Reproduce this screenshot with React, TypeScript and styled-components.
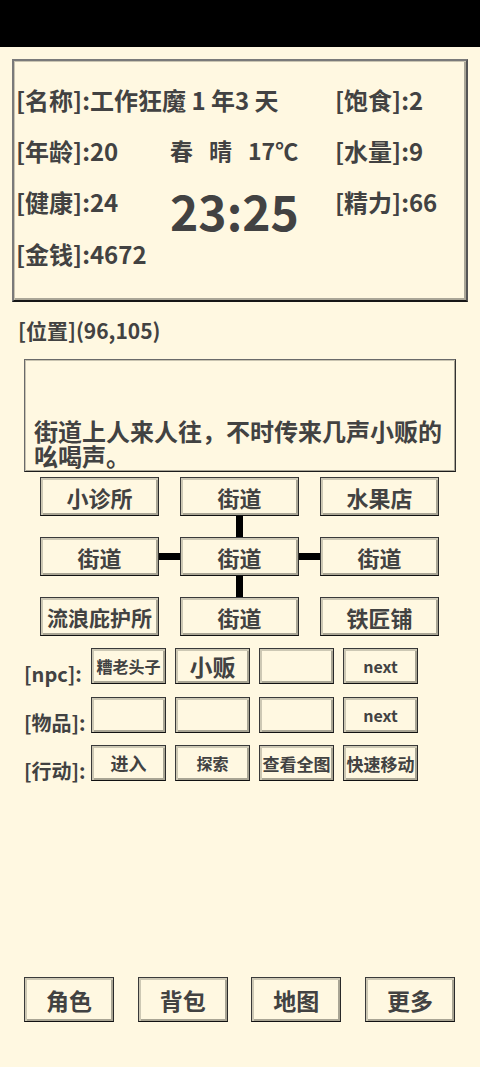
import styled, { createGlobalStyle } from "styled-components";

const GlobalStyle = createGlobalStyle`
  html, body {
    margin: 0;
    padding: 0;
    background: #fff8e1;
  }
  body {
    font-family: "Noto Sans CJK SC", "Noto Sans", sans-serif;
    color: #424242;
  }
  * {
    box-sizing: border-box;
  }
`;

const mapCells = [
  ["小诊所", "街道", "水果店"],
  ["街道", "街道", "街道"],
  ["流浪庇护所", "街道", "铁匠铺"],
];

type Slot = { text: string; size?: number };

const actionRows: { label: string; slots: Slot[] }[] = [
  {
    label: "[npc]:",
    slots: [
      { text: "糟老头子", size: 16 },
      { text: "小贩", size: 23 },
      { text: "" },
      { text: "next", size: 16 },
    ],
  },
  {
    label: "[物品]:",
    slots: [{ text: "" }, { text: "" }, { text: "" }, { text: "next", size: 16 }],
  },
  {
    label: "[行动]:",
    slots: [
      { text: "进入", size: 18 },
      { text: "探索", size: 16 },
      { text: "查看全图", size: 17 },
      { text: "快速移动", size: 17 },
    ],
  },
];

const navItems = ["角色", "背包", "地图", "更多"];

export default function App() {
  return (
    <>
      <GlobalStyle />
      <Page>
        <StatusBar />

        <StatsPanel>
          <Stat $row={1} $col={1} $span={2}>
            [名称]:工作狂魔 1 年3 天
          </Stat>
          <Stat $row={1} $col={3}>
            [饱食]:2
          </Stat>
          <Stat $row={2} $col={1}>
            [年龄]:20
          </Stat>
          <Weather>
            <span>春</span>
            <span>晴</span>
            <span>17℃</span>
          </Weather>
          <Stat $row={2} $col={3}>
            [水量]:9
          </Stat>
          <Stat $row={3} $col={1}>
            [健康]:24
          </Stat>
          <Clock>23:25</Clock>
          <Stat $row={3} $col={3}>
            [精力]:66
          </Stat>
          <Stat $row={4} $col={1}>
            [金钱]:4672
          </Stat>
        </StatsPanel>

        <Location>[位置](96,105)</Location>

        <Description>
          <p>街道上人来人往，不时传来几声小贩的吆喝声。</p>
        </Description>

        <MapGrid>
          {mapCells.map((row, r) =>
            row.map((name, c) => (
              <MapCell key={`${r}-${c}`} $row={r * 2 + 1} $col={c * 2 + 1} $size={name.length > 4 ? 21 : 22}>
                {name}
              </MapCell>
            ))
          )}
          <Connector $dir="v" $row={2} $col={3} />
          <Connector $dir="v" $row={4} $col={3} />
          <Connector $dir="h" $row={3} $col={2} />
          <Connector $dir="h" $row={3} $col={4} />
        </MapGrid>

        <ActionArea>
          {actionRows.map((row) => (
            <ActionRow key={row.label}>
              <RowLabel>{row.label}</RowLabel>
              {row.slots.map((slot, i) => (
                <SlotButton key={i} $size={slot.size ?? 16}>
                  {slot.text}
                </SlotButton>
              ))}
            </ActionRow>
          ))}
        </ActionArea>

        <NavBar>
          {navItems.map((item) => (
            <NavButton key={item}>{item}</NavButton>
          ))}
        </NavBar>
      </Page>
    </>
  );
}

const Page = styled.div`
  display: flex;
  flex-direction: column;
  min-height: 100vh;
`;

const StatusBar = styled.div`
  height: 47px;
  background: #000;
`;

const StatsPanel = styled.div`
  margin: 12px 12px 0;
  height: 243px;
  border: 2px solid;
  border-color: #7a7a7a #555 #161616 #7a7a7a;
  box-shadow: inset 1px 1px 0 #c9c4b1, inset -2px -2px 0 #aaa697;
  padding: 13px 0 0 2px;
  display: grid;
  grid-template-columns: 154px 165px 1fr;
  grid-template-rows: repeat(4, 51.3px);
  align-items: center;
`;

const Stat = styled.div<{ $row: number; $col: number; $span?: number }>`
  grid-row: ${(p) => p.$row};
  grid-column: ${(p) => p.$col} / span ${(p) => p.$span ?? 1};
  font-size: 24px;
  font-weight: 700;
  white-space: nowrap;
  line-height: 1;
`;

const Weather = styled.div`
  grid-row: 2;
  grid-column: 2;
  display: flex;
  gap: 16px;
  font-size: 23px;
  font-weight: 700;
  line-height: 1;
`;

const Clock = styled.div`
  grid-row: 3 / span 2;
  grid-column: 2;
  align-self: start;
  margin-top: 9px;
  font-size: 48px;
  font-weight: 700;
  line-height: 1;
`;

const Location = styled.div`
  margin-top: 14px;
  padding-left: 18px;
  font-size: 21px;
  font-weight: 700;
  line-height: 28px;
`;

const Description = styled.div`
  margin: 15px 24px 0;
  height: 113px;
  border: 1.5px solid;
  border-color: #6a6a6a #333 #1c1c1c #6a6a6a;
  box-shadow: inset 1px 1px 0 #c9c4b1, inset -1px -1px 0 #aaa697;
  display: flex;
  align-items: flex-end;
  padding: 0 8px 3px 9px;

  & p {
    margin: 0;
    font-size: 24px;
    font-weight: 700;
    line-height: 25px;
  }
`;

const MapGrid = styled.div`
  margin-top: 5px;
  padding-left: 40px;
  display: grid;
  grid-template-columns: 119px 21px 119px 21px 119px;
  grid-template-rows: 39px 21px 39px 21px 39px;
`;

const bevel = `
  background: #fff8e1;
  border: 1.5px solid;
  border-color: #3a3a3a #2a2a2a #111 #3a3a3a;
  box-shadow: inset 2px 2px 0 #cdc8b4, inset -2px -2px 0 #a9a594;
  color: #424242;
  font-family: inherit;
  font-weight: 700;
  display: flex;
  align-items: center;
  justify-content: center;
  padding: 0;
  white-space: nowrap;
`;

const MapCell = styled.div<{ $row: number; $col: number; $size: number }>`
  ${bevel}
  grid-row: ${(p) => p.$row};
  grid-column: ${(p) => p.$col};
  font-size: ${(p) => p.$size}px;
`;

const Connector = styled.div<{ $dir: "v" | "h"; $row: number; $col: number }>`
  grid-row: ${(p) => p.$row};
  grid-column: ${(p) => p.$col};
  background: #000;
  justify-self: center;
  align-self: center;
  width: ${(p) => (p.$dir === "v" ? "7px" : "100%")};
  height: ${(p) => (p.$dir === "v" ? "100%" : "7px")};
`;

const ActionArea = styled.div`
  margin-top: 12px;
  padding-left: 24px;
  display: flex;
  flex-direction: column;
  gap: 12.5px;
`;

const ActionRow = styled.div`
  display: flex;
  align-items: flex-end;
  gap: 9px;
`;

const RowLabel = styled.div`
  width: 58px;
  font-size: 20px;
  font-weight: 700;
  line-height: 1;
  white-space: nowrap;
`;

const SlotButton = styled.button<{ $size: number }>`
  ${bevel}
  width: 75px;
  height: 36px;
  font-size: ${(p) => p.$size}px;
`;

const NavBar = styled.div`
  margin-top: auto;
  padding: 0 25px 45px 24px;
  display: flex;
  justify-content: space-between;
`;

const NavButton = styled.button`
  ${bevel}
  width: 90px;
  height: 45px;
  font-size: 23px;
`;
